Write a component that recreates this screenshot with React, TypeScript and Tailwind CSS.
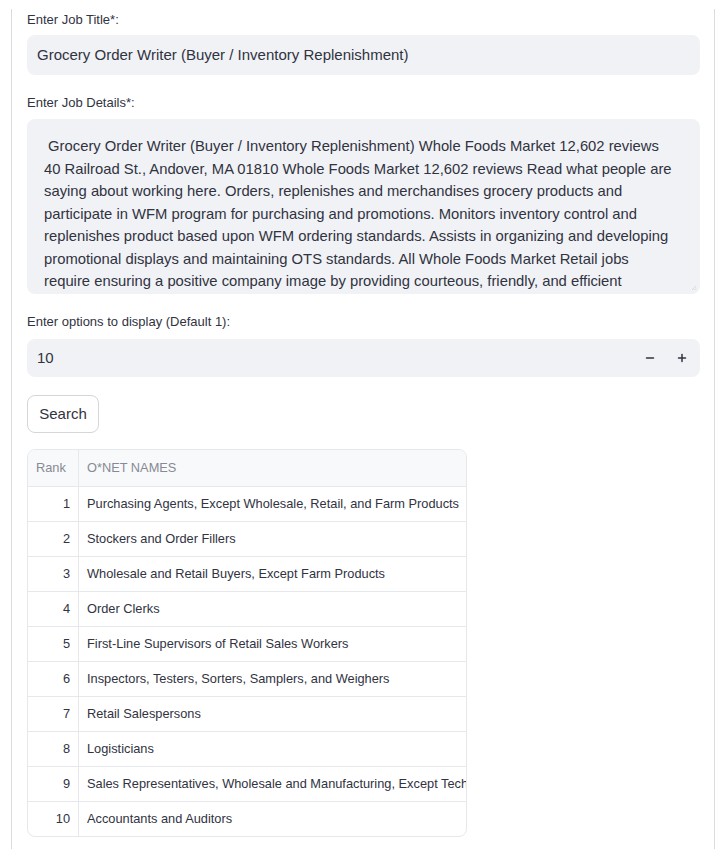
import { Minus, Plus } from 'lucide-react';

const jobDetails = [
  '\u00a0Grocery Order Writer (Buyer / Inventory Replenishment) Whole Foods Market 12,602 reviews',
  '40 Railroad St., Andover, MA 01810 Whole Foods Market 12,602 reviews Read what people are',
  'saying about working here. Orders, replenishes and merchandises grocery products and',
  'participate in WFM program for purchasing and promotions. Monitors inventory control and',
  'replenishes product based upon WFM ordering standards. Assists in organizing and developing',
  'promotional displays and maintaining OTS standards. All Whole Foods Market Retail jobs',
  'require ensuring a positive company image by providing courteous, friendly, and efficient',
];

const results = [
  'Purchasing Agents, Except Wholesale, Retail, and Farm Products',
  'Stockers and Order Fillers',
  'Wholesale and Retail Buyers, Except Farm Products',
  'Order Clerks',
  'First-Line Supervisors of Retail Sales Workers',
  'Inspectors, Testers, Sorters, Samplers, and Weighers',
  'Retail Salespersons',
  'Logisticians',
  'Sales Representatives, Wholesale and Manufacturing, Except Technical and Scientific Products',
  'Accountants and Auditors',
];

function Label({ text, className = '' }: { text: string; className?: string }) {
  return (
    <div className={`flex h-[22px] items-center text-[13px] text-[#31333f] ${className}`}>
      {text}
    </div>
  );
}

export default function App() {
  return (
    <div
      className="h-[856px] w-[718px] overflow-hidden bg-white"
      style={{ fontFamily: '"Source Sans Pro", "Liberation Sans", Arial, sans-serif' }}
    >
      <div className="ml-[11px] mt-[13px] h-[840px] w-[704px] border-x border-[#dcdcdc] pl-[15px] pr-[14px]">
        {/* Job title */}
        <Label text="Enter Job Title*:" className="-mt-[4px] mb-[4px]" />
        <div className="flex h-[40px] items-center rounded-lg bg-[#f0f2f6] px-[10px] text-[15px] text-[#31333f]">
          Grocery Order Writer (Buyer / Inventory Replenishment)
        </div>

        {/* Job details */}
        <Label text="Enter Job Details*:" className="mb-[5px] mt-[17px]" />
        <div className="relative h-[175px] overflow-hidden rounded-lg bg-[#f0f2f6] pl-[17px] pr-4 pt-[16px] text-[14.8px] leading-[22.5px] text-[#31333f]">
          {jobDetails.map((line, i) => (
            <div key={i} className="whitespace-nowrap">
              {line}
            </div>
          ))}
          <svg className="absolute bottom-[3px] right-[3px]" width="6" height="6" viewBox="0 0 6 6">
            <path d="M5 1 L1 5 M5 3.5 L3.5 5" stroke="#c9cbd0" strokeWidth="0.7" />
          </svg>
        </div>

        {/* Options */}
        <Label text="Enter options to display (Default 1):" className="mb-[6px] mt-[17px]" />
        <div className="flex h-[38px] items-center rounded-lg bg-[#f0f2f6] pl-[10px] pr-[2px] text-[15px] text-[#31333f]">
          <span className="flex-1">10</span>
          <button className="flex h-full w-8 items-center justify-center">
            <Minus size={12} strokeWidth={3} color="#31333f" />
          </button>
          <button className="flex h-full w-8 items-center justify-center">
            <Plus size={12} strokeWidth={3} color="#31333f" />
          </button>
        </div>

        <button className="mt-[18px] flex h-[38px] w-[72px] items-center justify-center rounded-lg border border-[#d5d6da] bg-white text-[15px] text-[#31333f]">
          Search
        </button>

        {/* Results table */}
        <div className="mt-[16px] w-[440px] overflow-hidden rounded-lg border border-[#e6e8ec] text-[12.8px] text-[#31333f]">
          <div className="flex h-[36px] bg-[#f8f9fb] text-[#878a93]">
            <div className="flex w-[51px] items-center border-r border-[#e6e8ec] pl-[8px]">Rank</div>
            <div className="flex flex-1 items-center pl-[8px]">O*NET NAMES</div>
          </div>
          {results.map((name, i) => (
            <div key={i} className="flex h-[35px] border-t border-[#e6e8ec]">
              <div className="flex w-[51px] items-center justify-end border-r border-[#e6e8ec] pr-[8px]">
                {i + 1}
              </div>
              <div className="flex flex-1 items-center overflow-hidden whitespace-nowrap pl-[8px]">{name}</div>
            </div>
          ))}
        </div>
      </div>
    </div>
  );
}
